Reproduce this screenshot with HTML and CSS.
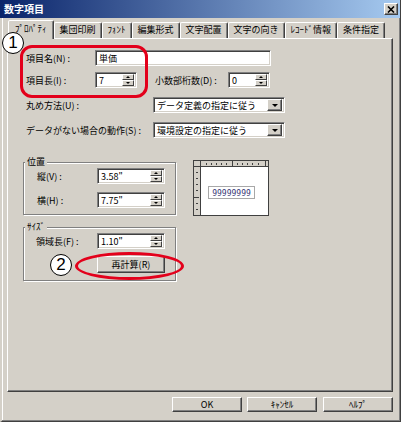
FILE: index.html
```html
<!DOCTYPE html>
<html lang="ja">
<head>
  <meta charset="UTF-8" />
  <title>数字項目</title>
  <link rel="stylesheet" href="styles.css">
</head>
<body>
  <div class="window">
    <div class="titlebar">
      <span class="title">数字項目</span>
      <span class="close-btn">
        <svg width="8" height="7" viewBox="0 0 8 7"><path d="M1 0.5 L7 6.5 M7 0.5 L1 6.5" stroke="#000" stroke-width="1.6"/></svg>
      </span>
    </div>

    <div class="tabs">
      <div class="tab active">ﾌﾟﾛﾊﾟﾃｨ</div>
      <div class="tab">集団印刷</div>
      <div class="tab">ﾌｫﾝﾄ</div>
      <div class="tab">編集形式</div>
      <div class="tab">文字配置</div>
      <div class="tab">文字の向き</div>
      <div class="tab">ﾚｺｰﾄﾞ情報</div>
      <div class="tab">条件指定</div>
    </div>

    <div class="panel">
      <div class="row">
        <span class="lbl">項目名(N) :</span>
        <div class="field name-field"><span class="val">単価</span></div>
      </div>
      <div class="row row-len">
        <span class="lbl">項目長(I) :</span>
        <div class="field spin-field small">
          <span class="val">7</span>
          <div class="spin"><span class="spin-up"><i class="up"></i></span><span class="spin-dn"><i class="dn"></i></span></div>
        </div>
        <span class="lbl lbl-dec">小数部桁数(D) :</span>
        <div class="field spin-field small">
          <span class="val">0</span>
          <div class="spin"><span class="spin-up"><i class="up"></i></span><span class="spin-dn"><i class="dn"></i></span></div>
        </div>
      </div>
      <div class="row row-sel">
        <span class="lbl lbl-wide">丸め方法(U) :</span>
        <div class="field select"><span class="val">データ定義の指定に従う</span><span class="drop"><i class="dn big"></i></span></div>
      </div>
      <div class="row row-sel">
        <span class="lbl lbl-wide">データがない場合の動作(S) :</span>
        <div class="field select"><span class="val">環境設定の指定に従う</span><span class="drop"><i class="dn big"></i></span></div>
      </div>

      <div class="groups-row">
        <div class="groups">
          <div class="group group-pos">
            <span class="legend">位置</span>
            <div class="row">
              <span class="lbl lbl-g">縦(V) :</span>
              <div class="field spin-field mid">
                <span class="val">3.58"</span>
                <div class="spin"><span class="spin-up"><i class="up"></i></span><span class="spin-dn"><i class="dn"></i></span></div>
              </div>
            </div>
            <div class="row row-gap">
              <span class="lbl lbl-g">横(H) :</span>
              <div class="field spin-field mid">
                <span class="val">7.75"</span>
                <div class="spin"><span class="spin-up"><i class="up"></i></span><span class="spin-dn"><i class="dn"></i></span></div>
              </div>
            </div>
          </div>

          <div class="group group-size">
            <span class="legend">ｻｲｽﾞ</span>
            <div class="row">
              <span class="lbl lbl-g2">領域長(F) :</span>
              <div class="field spin-field mid">
                <span class="val">1.10"</span>
                <div class="spin"><span class="spin-up"><i class="up"></i></span><span class="spin-dn"><i class="dn"></i></span></div>
              </div>
            </div>
            <div class="recalc-row">
              <div class="btn recalc">再計算(R)</div>
            </div>
          </div>
        </div>

        <div class="preview">
          <svg width="76" height="56" viewBox="0 0 76 56">
            <rect x="0" y="0" width="76" height="56" fill="#fff"/>
            <rect x="1" y="1" width="74" height="5" fill="#d4d0c8"/>
            <rect x="1" y="6" width="6" height="49" fill="#d4d0c8"/>
            <g stroke="#404040" stroke-width="1">
              <line x1="13.5" y1="3" x2="13.5" y2="5"/>
              <line x1="18.5" y1="3" x2="18.5" y2="5"/>
              <line x1="23.5" y1="3" x2="23.5" y2="5"/>
              <line x1="28.5" y1="3" x2="28.5" y2="5"/>
              <line x1="33.5" y1="3" x2="33.5" y2="5"/>
              <line x1="39.5" y1="1" x2="39.5" y2="6"/>
              <line x1="44.5" y1="3" x2="44.5" y2="5"/>
              <line x1="49.5" y1="3" x2="49.5" y2="5"/>
              <line x1="54.5" y1="3" x2="54.5" y2="5"/>
              <line x1="59.5" y1="3" x2="59.5" y2="5"/>
              <line x1="65.5" y1="3" x2="65.5" y2="5"/>
              <line x1="72.5" y1="1" x2="72.5" y2="6"/>
              <line x1="3" y1="12.5" x2="5" y2="12.5"/>
              <line x1="3" y1="18.5" x2="5" y2="18.5"/>
              <line x1="3" y1="24.5" x2="5" y2="24.5"/>
              <line x1="3" y1="30.5" x2="5" y2="30.5"/>
              <line x1="1" y1="37.5" x2="6" y2="37.5"/>
              <line x1="3" y1="43.5" x2="5" y2="43.5"/>
              <line x1="3" y1="49.5" x2="5" y2="49.5"/>
            </g>
            <rect x="0.5" y="0.5" width="75" height="55" fill="none" stroke="#404040"/>
            <line x1="0" y1="6.5" x2="76" y2="6.5" stroke="#404040"/>
            <line x1="7.5" y1="0" x2="7.5" y2="56" stroke="#404040"/>
            <rect x="15.5" y="26.5" width="46" height="12" fill="#fff" stroke="#a8a8a8"/>
            <text x="38.5" y="36" text-anchor="middle" class="preview-text">99999999</text>
          </svg>
        </div>
      </div>
    </div>

    <div class="buttons">
      <div class="btn bottom-btn">OK</div>
      <div class="btn bottom-btn">ｷｬﾝｾﾙ</div>
      <div class="btn bottom-btn help">ﾍﾙﾌﾟ</div>
    </div>

    <!-- annotations -->
    <div class="mark mark-rect"></div>
    <div class="mark mark-ellipse"></div>
    <div class="num num-1">1</div>
    <div class="num num-2">2</div>
  </div>
</body>
</html>
```

FILE: styles.css
```css
* {
  margin: 0;
  padding: 0;
  box-sizing: border-box;
}

body {
  width: 401px;
  height: 422px;
  overflow: hidden;
  background: #d4d0c8;
  font-family: "Noto Sans CJK JP", sans-serif;
  font-size: 9px;
  color: #000;
}

.window {
  position: relative;
  width: 401px;
  height: 422px;
  background: #d4d0c8;
  border-left: 2px solid #d4d0c8;
  border-right: 1px solid #404040;
  border-bottom: 1px solid #404040;
  box-shadow: inset -1px -1px 0 #808080, inset 1px 0 0 #fff;
}

/* title bar */
.titlebar {
  height: 18px;
  margin-left: -2px;
  padding: 0 2px 0 4px;
  display: flex;
  align-items: center;
  justify-content: space-between;
  background: linear-gradient(90deg, #0a246a, #a6caf0);
}

.title {
  color: #fff;
  font-weight: bold;
  font-size: 10px;
  line-height: 18px;
}

.close-btn {
  width: 14px;
  height: 12px;
  display: flex;
  align-items: center;
  justify-content: center;
  background: #d4d0c8;
  border: 1px solid;
  border-color: #fff #404040 #404040 #fff;
  box-shadow: inset -1px -1px 0 #808080;
}

/* tabs */
.tabs {
  height: 20px;
  padding-left: 6px;
  display: flex;
  align-items: flex-end;
}

.tab {
  height: 16px;
  padding: 0 5px;
  line-height: 14px;
  white-space: nowrap;
  border: 1px solid;
  border-bottom: none;
  border-color: #fff #404040 transparent #fff;
  border-radius: 2px 2px 0 0;
  box-shadow: inset -1px 0 0 #808080;
}

.tab.active {
  position: relative;
  z-index: 1;
  height: 19px;
  margin-bottom: -1px;
  padding: 0 6px;
  line-height: 16px;
  background: #d4d0c8;
}

/* tab panel */
.panel {
  margin-left: 5px;
  width: 386px;
  height: 354px;
  padding: 11px 0 0 15px;
  border: 1px solid;
  border-color: #fff #404040 #404040 #fff;
  box-shadow: inset -1px -1px 0 #808080;
}

.row {
  display: flex;
  align-items: center;
  height: 16px;
  margin-left: 3px;
}

.row-len {
  margin-top: 6px;
}

.row-sel {
  margin-top: 9px;
}

.lbl {
  width: 69px;
  white-space: nowrap;
}

.lbl-dec {
  width: 73px;
  margin-left: 18px;
}

.lbl-wide {
  width: 127px;
}

/* sunken fields */
.field {
  height: 16px;
  display: flex;
  align-items: center;
  background: #fff;
  border: 1px solid;
  border-color: #808080 #fff #fff #808080;
  box-shadow: inset 1px 1px 0 #404040, inset -1px -1px 0 #d4d0c8;
}

.val {
  flex: 1;
  padding-left: 3px;
  white-space: nowrap;
  overflow: hidden;
}

.name-field {
  width: 176px;
}

.small {
  width: 42px;
}

.mid {
  width: 68px;
}

.spin {
  width: 12px;
  height: 12px;
  margin-right: 2px;
  display: flex;
  flex-direction: column;
}

.spin-up,
.spin-dn,
.drop {
  flex: 1;
  display: flex;
  align-items: center;
  justify-content: center;
  background: #d4d0c8;
  border: 1px solid;
  border-color: #fff #404040 #404040 #fff;
}

.up,
.dn {
  display: block;
  width: 0;
  height: 0;
  border-left: 2px solid transparent;
  border-right: 2px solid transparent;
}

.up {
  border-bottom: 2px solid #000;
}

.dn {
  border-top: 2px solid #000;
}

.dn.big {
  border-left-width: 3px;
  border-right-width: 3px;
  border-top-width: 3px;
}

.select {
  width: 132px;
}

.drop {
  flex: none;
  width: 15px;
  height: 12px;
  margin-right: 2px;
  box-shadow: inset -1px -1px 0 #808080;
}

/* groups */
.groups-row {
  display: flex;
  align-items: flex-start;
  margin-top: 22px;
}

.groups {
  width: 153px;
}

.group {
  position: relative;
  border: 1px solid #808080;
  box-shadow: inset 1px 1px 0 #fff, 1px 1px 0 #fff;
}

.group-pos {
  margin-top: 2px;
  height: 53px;
  padding: 5px 0 0 10px;
}

.group-size {
  margin-top: 12px;
  height: 54px;
  padding: 5px 0 0 9px;
}

.legend {
  position: absolute;
  top: -7px;
  left: 1px;
  padding: 0 2px;
  line-height: 12px;
  background: #d4d0c8;
}

.lbl-g {
  width: 60px;
}

.lbl-g2 {
  width: 61px;
}

.row-gap {
  margin-top: 8px;
}

.recalc-row {
  margin-top: 7px;
  padding-left: 64px;
}

/* raised buttons */
.btn {
  height: 17px;
  display: flex;
  align-items: center;
  justify-content: center;
  background: #d4d0c8;
  border: 1px solid;
  border-color: #fff #404040 #404040 #fff;
  box-shadow: inset -1px -1px 0 #808080;
}

.recalc {
  width: 68px;
}

.preview {
  margin-left: 17px;
  width: 76px;
  height: 56px;
}

.preview svg {
  display: block;
}

.preview-text {
  font-family: "DejaVu Sans Mono", monospace;
  font-size: 8px;
  fill: #3a3a78;
}

.buttons {
  display: flex;
  justify-content: flex-end;
  gap: 5px;
  margin-top: 5px;
  padding-right: 7px;
}

.bottom-btn {
  width: 70px;
  height: 15px;
}

.help {
  margin-left: 1px;
}

/* annotations */
.mark {
  position: absolute;
  z-index: 2;
  border: 3px solid #e3001b;
}

.mark-rect {
  left: 18px;
  top: 45px;
  width: 128px;
  height: 53px;
  border-radius: 12px;
}

.mark-ellipse {
  left: 73px;
  top: 252px;
  width: 109px;
  height: 28px;
  border-radius: 50%;
}

.num {
  position: absolute;
  z-index: 3;
  width: 22px;
  height: 22px;
  border: 1px solid #000;
  border-radius: 50%;
  background: #fff;
  font-family: "Liberation Sans", sans-serif;
  font-size: 17px;
  line-height: 20px;
  text-align: center;
}

.num-1 {
  left: 0;
  top: 32px;
}

.num-2 {
  left: 48px;
  top: 254px;
}
```
